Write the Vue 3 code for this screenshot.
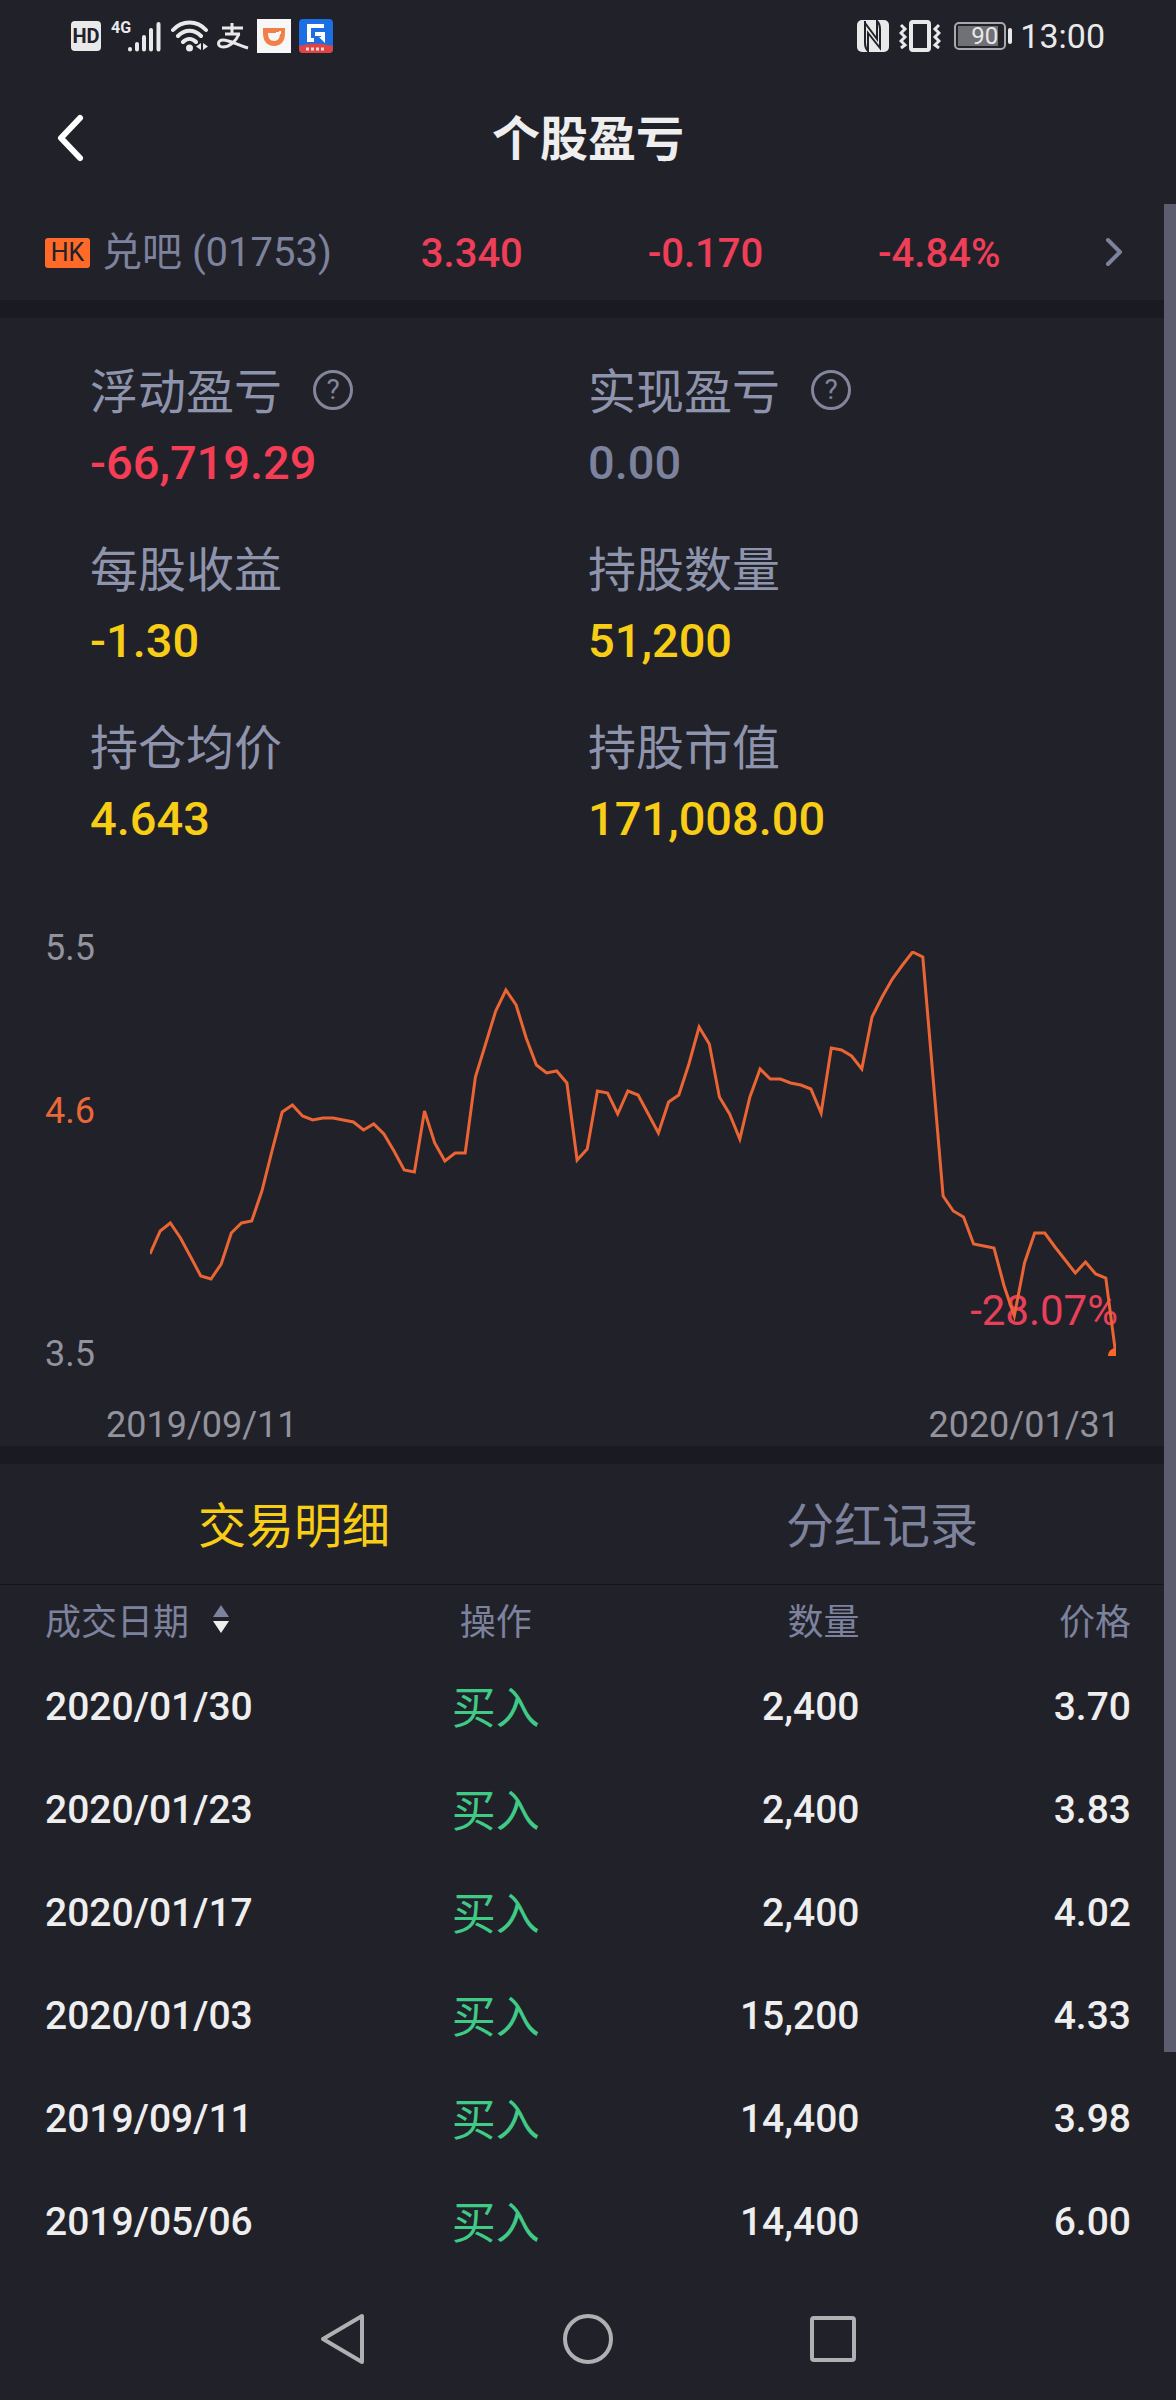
<script setup>
import { ref } from 'vue'

const quotes = ['3.340', '-0.170', '-4.84%']

const stats = [
  { label: '浮动盈亏', value: '-66,719.29', tone: 'loss', help: true },
  { label: '实现盈亏', value: '0.00', tone: 'flat', help: true },
  { label: '每股收益', value: '-1.30', tone: 'gold' },
  { label: '持股数量', value: '51,200', tone: 'gold' },
  { label: '持仓均价', value: '4.643', tone: 'gold' },
  { label: '持股市值', value: '171,008.00', tone: 'gold' },
]

const tabs = ['交易明细', '分红记录']
const activeTab = ref(0)

const trades = [
  { date: '2020/01/30', amount: '2,400', price: '3.70' },
  { date: '2020/01/23', amount: '2,400', price: '3.83' },
  { date: '2020/01/17', amount: '2,400', price: '4.02' },
  { date: '2020/01/03', amount: '15,200', price: '4.33' },
  { date: '2019/09/11', amount: '14,400', price: '3.98' },
  { date: '2019/05/06', amount: '14,400', price: '6.00' },
]

// One value per trading day, measured down from the top of the plot.
const plotWidth = 966
const plotHeight = 405
const series = [
  303, 280, 272, 287, 306, 325, 328, 313, 282, 272, 270, 240, 200, 161, 154, 165,
  169, 167, 167, 169, 171, 179, 173, 183, 200, 219, 221, 160, 192, 210, 202, 202,
  126, 93, 60, 39, 54, 87, 114, 122, 120, 132, 209, 198, 140, 142, 163, 140,
  144, 163, 182, 151, 144, 113, 76, 93, 146, 163, 188, 146, 118, 128, 128, 132,
  134, 138, 162, 97, 99, 105, 118, 66, 46, 28, 14, 1, 6, 126, 245, 260,
  266, 293, 295, 297, 335, 365, 312, 282, 282, 296, 309, 322, 311, 323, 327, 405,
]
const linePoints = series
  .map((y, i) => `${((i * plotWidth) / (series.length - 1)).toFixed(1)},${y}`)
  .join(' ')
</script>

<template>
  <div class="screen">
    <div class="status">
      <div class="status-left">
        <span class="hd">HD</span>
        <span class="net">4G</span>
        <svg class="signal" width="34" height="34" viewBox="0 0 34 34">
          <g stroke="#e9e9ea" stroke-width="4" stroke-linecap="round">
            <path d="M3 30v.5M10 25v5.500M17 18v12.500M24 11v19.500M31.500 5v25.500" />
          </g>
        </svg>
        <svg class="wifi" width="38" height="34" viewBox="0 0 38 34">
          <g fill="none" stroke="#e9e9ea" stroke-width="4" stroke-linecap="round">
            <path d="M2 11C11 1 26 1 35 11M7 17c7-7 16-7 23 0M12 23c4-4 9-4 13 0" />
          </g>
          <circle cx="18.500" cy="29" r="3.500" fill="#e9e9ea" />
          <path d="M30 24v7l-5-3.500zM32 24v7l5-3.500z" fill="#e9e9ea" />
        </svg>
        <svg class="pay" width="32" height="34" viewBox="0 0 32 34">
          <g fill="none" stroke="#e9e9ea" stroke-width="3">
            <path d="M5 9h21M15 4v11M8 15h15" />
            <path d="M22 15C19 22 13 28 6 28c-6 0-6-7 0-7 7 0 14 5 25 8" />
          </g>
        </svg>
        <svg class="app" width="34" height="34" viewBox="0 0 34 34">
          <rect width="34" height="34" fill="#f7f7f7" />
          <path d="M6 9h22v5c0 8-4 13-11 13S6 22 6 14z" fill="#f08048" />
          <path d="M11 13h12v1c0 5-2 8-6 8s-6-3-6-8z" fill="#f7f7f7" />
          <path d="M11 13h8v1h-8z" fill="#f08048" />
          <path d="M22 12h2v3h-2z" fill="#f7f7f7" />
        </svg>
        <svg class="app2" width="34" height="34" viewBox="0 0 34 34">
          <rect width="34" height="34" rx="4" fill="#1c6fe3" />
          <path d="M25 7H10v14h5M16 15h8" fill="none" stroke="#fff" stroke-width="4" />
          <path d="M22 13h4v11l-6-6h2z" fill="#fff" />
          <path d="M0 27q17-5 34 0v3a4 4 0 0 1-4 4H4a4 4 0 0 1-4-4z" fill="#df4343" />
          <path d="M7 30h20" stroke="#fff" stroke-width="3" stroke-dasharray="3 2" opacity=".8" />
        </svg>
      </div>
      <div class="status-right">
        <svg width="32" height="32" viewBox="0 0 32 32">
          <rect width="32" height="32" rx="5" fill="#e9e9ea" />
          <path d="M8 1v22c0 4 1 6 3 8V13l12 15V9c0-4-1-6-3-8v18L8 3" fill="none" stroke="#21212a" stroke-width="2" />
        </svg>
        <svg class="vibrate" width="42" height="32" viewBox="0 0 42 32">
          <rect x="12" y="2" width="18" height="28" rx="2" fill="none" stroke="#e9e9ea" stroke-width="4" />
          <path d="M2 5l4 4-4 4 4 4-4 4 4 4-4 3M40 5l-4 4 4 4-4 4 4 4-4 4 4 3" fill="none" stroke="#e9e9ea" stroke-width="3" />
        </svg>
        <span class="battery"><span class="level">90</span></span>
        <span class="battery-tip"></span>
        <span class="clock">13:00</span>
      </div>
    </div>

    <header class="header">
      <button class="back" aria-label="返回">
        <svg width="30" height="50" viewBox="0 0 30 50">
          <path d="M25 5L6 25l19 20" fill="none" stroke="#fff" stroke-width="6" stroke-linecap="round" stroke-linejoin="round" />
        </svg>
      </button>
      <h1>个股盈亏</h1>
    </header>

    <main class="content">
      <a class="stock" href="#">
        <span class="name"><span class="market">HK</span>兑吧 (01753)</span>
        <span v-for="q in quotes" :key="q" class="quote">{{ q }}</span>
        <svg class="more" width="20" height="34" viewBox="0 0 20 34">
          <path d="M5 5l12 12L5 29" fill="none" stroke="#7d829d" stroke-width="4" stroke-linecap="round" stroke-linejoin="round" />
        </svg>
      </a>

      <section class="stats">
        <div v-for="s in stats" :key="s.label" class="stat">
          <div class="label">
            {{ s.label }}
            <button v-if="s.help" class="help" :aria-label="s.label + '说明'">?</button>
          </div>
          <div class="value" :class="s.tone">{{ s.value }}</div>
        </div>
      </section>

      <section class="chart">
        <div class="chart-body">
          <div class="axis">
            <span>5.5</span>
            <i class="gap-upper"></i>
            <span class="cost">4.6</span>
            <i class="gap-lower"></i>
            <span>3.5</span>
          </div>
          <div class="plot">
            <span class="change">-28.07%</span>
            <svg class="line" :viewBox="`0 0 ${plotWidth} ${plotHeight}`" preserveAspectRatio="none">
              <polyline :points="linePoints" />
              <circle :cx="plotWidth" :cy="plotHeight" r="8" />
            </svg>
          </div>
        </div>
        <div class="dates"><span>2019/09/11</span><span>2020/01/31</span></div>
      </section>

      <nav class="tabs">
        <button v-for="(t, i) in tabs" :key="t" :class="{ active: i === activeTab }" @click="activeTab = i">{{ t }}</button>
      </nav>

      <table class="trades">
        <thead>
          <tr>
            <th class="date">
              <button class="sort">
                成交日期
                <svg width="16" height="28" viewBox="0 0 16 28">
                  <path d="M8 0l8 12H0z" fill="#7d829d" />
                  <path d="M8 28l8-12H0z" fill="#eee" />
                </svg>
              </button>
            </th>
            <th class="action">操作</th>
            <th class="amount">数量</th>
            <th class="price">价格</th>
          </tr>
        </thead>
        <tbody>
          <tr v-for="t in trades" :key="t.date">
            <td class="date">{{ t.date }}</td>
            <td class="action">买入</td>
            <td class="amount">{{ t.amount }}</td>
            <td class="price">{{ t.price }}</td>
          </tr>
        </tbody>
      </table>

      <div class="scrollbar"></div>
    </main>

    <footer class="system-nav">
      <button aria-label="返回上一页">
        <svg width="50" height="54" viewBox="0 0 50 54">
          <path d="M44 4v46L5 27z" fill="none" stroke="#b0b0b2" stroke-width="4" stroke-linejoin="round" />
        </svg>
      </button>
      <button aria-label="主屏幕">
        <svg width="50" height="50" viewBox="0 0 50 50">
          <circle cx="25" cy="25" r="23" fill="none" stroke="#b0b0b2" stroke-width="4" />
        </svg>
      </button>
      <button aria-label="最近任务">
        <svg width="46" height="46" viewBox="0 0 46 46">
          <rect x="2" y="2" width="42" height="42" rx="2" fill="none" stroke="#b0b0b2" stroke-width="4" />
        </svg>
      </button>
    </footer>
  </div>
</template>

<style>
body {
  background: #21212a;
}
</style>

<style scoped>
.screen {
  background: #21212a;
  color: #eee;
  font-family: Roboto, "Noto Sans CJK SC", sans-serif;
}
button {
  border: 0;
  padding: 0;
  background: none;
  color: inherit;
  font: inherit;
}
svg {
  display: block;
  flex: none;
}
.status {
  display: flex;
  justify-content: space-between;
  align-items: center;
  height: 72px;
  padding: 0 71px;
  color: #e9e9ea;
}
.status-left,
.status-right {
  display: flex;
  align-items: center;
}
.hd {
  width: 30px;
  height: 30px;
  border-radius: 4px;
  background: #e9e9ea;
  color: #21212a;
  font-size: 20px;
  font-weight: 700;
  line-height: 30px;
  text-align: center;
}
.net {
  align-self: flex-start;
  margin-left: 10px;
  font-size: 16px;
  font-weight: 700;
  line-height: 18px;
  width: 16px;
}
.wifi {
  margin-left: 10px;
}
.pay,
.app,
.app2 {
  margin-left: 8px;
}
.vibrate {
  margin: 0 13px 0 10px;
}
.battery {
  display: flex;
  width: 52px;
  height: 28px;
  box-sizing: border-box;
  border: 2px solid #a9a9ad;
  border-radius: 5px;
  padding: 2px;
}
.level {
  width: 40px;
  background: #707075;
  font-size: 24px;
  line-height: 21px;
  text-align: right;
}
.battery-tip {
  width: 4px;
  height: 16px;
  margin-left: 2px;
  border-radius: 2px;
  background: #e9e9ea;
}
.clock {
  margin-left: 8px;
  font-size: 34px;
  line-height: 40px;
}
.header {
  display: flex;
  align-items: center;
  justify-content: center;
  position: relative;
  height: 132px;
}
.back {
  position: absolute;
  left: 55px;
}
h1 {
  margin: 0;
  padding-top: 4px;
  font-size: 48px;
  font-weight: 700;
  line-height: 64px;
}
.content {
  position: relative;
}
.scrollbar {
  position: absolute;
  top: 0;
  right: 0;
  width: 12px;
  height: calc(100% - 221px);
  background: #5c5e6f;
}
.stock {
  display: grid;
  grid-template-columns: 310px 1fr 1fr 1fr 67px;
  align-items: center;
  height: 96px;
  padding: 0 53px 0 45px;
  color: #7d829d;
  font-size: 40px;
  line-height: 60px;
  text-decoration: none;
}
.name {
  display: flex;
  align-items: center;
  padding-top: 2px;
  white-space: nowrap;
}
.market {
  width: 45px;
  height: 30px;
  margin-right: 12px;
  border-radius: 3px;
  background: #ff6a28;
  color: #21212a;
  font-size: 25px;
  line-height: 30px;
  text-align: center;
}
.quote {
  padding-top: 4px;
  color: #ef3e58;
  font-weight: 500;
  text-align: center;
}
.more {
  justify-self: end;
}
.stats {
  display: grid;
  grid-template-columns: 1fr 1fr;
  row-gap: 38px;
  padding: 40px 90px 0;
  border-top: 18px solid #1a1a22;
  font-size: 48px;
  line-height: 70px;
}
.label {
  display: flex;
  align-items: center;
  height: 70px;
  color: #8f94ad;
}
.help {
  width: 40px;
  height: 40px;
  margin: 0 0 6px 31px;
  border: 3px solid #84859b;
  border-radius: 50%;
  color: #84859b;
  font-size: 28px;
  line-height: 34px;
}
.value {
  height: 70px;
  font-size: 47px;
  font-weight: 500;
}
.loss {
  color: #f53d56;
}
.flat {
  color: #7d829d;
}
.gold {
  color: #f7cd15;
}
.chart {
  padding: 73px 56px 0 45px;
  border-bottom: 18px solid #1a1a22;
  color: #92939d;
  font-size: 36px;
  line-height: 42px;
}
.chart-body {
  display: flex;
  height: 448px;
}
.axis {
  display: flex;
  flex-direction: column;
  width: 105px;
}
.gap-upper {
  flex: 3;
}
.gap-lower {
  flex: 5;
}
.cost {
  color: #ea6737;
}
.plot {
  position: relative;
  flex: 1;
  height: 405px;
  margin: 24px 4px 0 0;
}
.line {
  position: relative;
  width: 100%;
  height: 100%;
  overflow: hidden;
}
.line polyline {
  fill: none;
  stroke: #ea6434;
  stroke-width: 3px;
  vector-effect: non-scaling-stroke;
}
.line circle {
  fill: #ff6428;
}
.change {
  position: absolute;
  right: -2px;
  bottom: 20px;
  color: #e8405a;
  font-size: 42px;
  line-height: 50px;
}
.dates {
  display: flex;
  justify-content: space-between;
  margin: 29px 0 0 61px;
}
.tabs {
  display: flex;
  height: 120px;
  border-bottom: 1px solid #14141c;
}
.tabs button {
  flex: 1;
  padding-bottom: 4px;
  font-size: 48px;
  color: #7d829d;
}
.tabs .active {
  color: #f7cd15;
}
.trades {
  width: calc(100% - 90px);
  margin: 0 45px;
  border-collapse: collapse;
  table-layout: fixed;
  font-size: 39px;
  font-weight: 500;
}
.trades th {
  height: 67px;
  padding: 0 0 3px;
  color: #7d829d;
  font-size: 36px;
  font-weight: 400;
}
.trades td {
  height: 103px;
  padding: 0;
}
.trades .date {
  width: 27%;
  text-align: left;
}
.trades .action {
  width: 29%;
  text-align: center;
}
.trades .amount {
  width: 19%;
  text-align: right;
}
.trades .price {
  width: 25%;
  text-align: right;
}
.trades td.action {
  height: 99px;
  padding-bottom: 4px;
  color: #3fca85;
  font-size: 44px;
  font-weight: 400;
}
.sort {
  display: flex;
  align-items: center;
  gap: 24px;
}
.system-nav {
  display: flex;
  justify-content: center;
  height: 122px;
  padding-top: 5px;
}
.system-nav button {
  display: flex;
  align-items: center;
  justify-content: center;
  width: 245px;
}
</style>
